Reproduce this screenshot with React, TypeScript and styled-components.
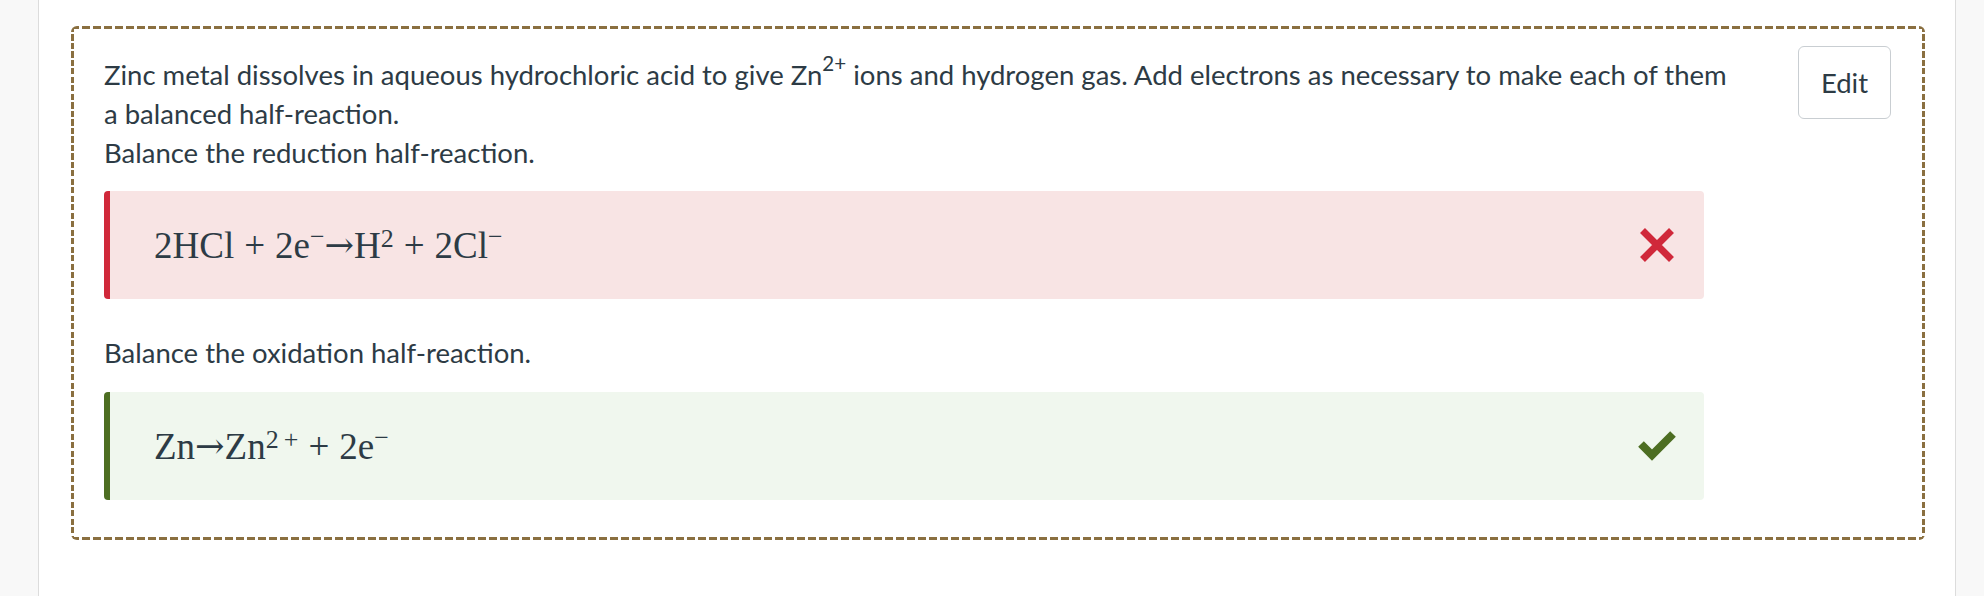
import styled, { createGlobalStyle } from 'styled-components';

const GlobalStyle = createGlobalStyle`
  html, body {
    margin: 0;
    padding: 0;
    background: #ffffff;
  }
  body {
    font-family: Lato, "Liberation Sans", sans-serif;
    color: #2d3b45;
  }
`;

const Page = styled.div`
  display: flex;
  height: 596px;
  overflow: hidden;
`;

const Rail = styled.aside<{ $side: 'left' | 'right' }>`
  flex: none;
  width: ${({ $side }) => ($side === 'left' ? '38px' : '28px')};
  background: #f8f8f8;
  border-${({ $side }) => ($side === 'left' ? 'right' : 'left')}: 1px solid #dcdcdc;
`;

const Main = styled.main`
  flex: 1;
  min-width: 0;
  padding: 26px 30px 0 32px;
  background: #ffffff;
`;

// dashed frame drawn with gradients so the dash rhythm matches the screenshot
const dashH = 'repeating-linear-gradient(90deg, #8a6f40 0 8px, transparent 8px 11px)';
const dashV = 'repeating-linear-gradient(180deg, #8a6f40 0 6px, transparent 6px 8.5px)';

const QuestionCard = styled.section`
  border-radius: 6px;
  padding: 20px 34px 40px 33px;
  background:
    ${dashH} top left / 100% 3px no-repeat,
    ${dashH} bottom left / 100% 3px no-repeat,
    ${dashV} top left / 3px 100% no-repeat,
    ${dashV} top right / 3px 100% no-repeat;
`;

const Header = styled.div`
  display: flex;
  align-items: flex-start;
  gap: 56px;
  margin-bottom: 19px;
`;

const Prompt = styled.div`
  flex: 1;
  margin-top: 9px;
  font-size: 27.5px;
  line-height: 39px;
`;

const Paragraph = styled.p`
  margin: 0;

  sup {
    font-size: 0.75em;
    line-height: 0;
    vertical-align: 0.68em;
  }
`;

const EditButton = styled.button`
  flex: none;
  width: 93px;
  height: 73px;
  padding: 0;
  background: #ffffff;
  border: 1px solid #c9ced2;
  border-radius: 6px;
  font-family: Lato, "Liberation Sans", sans-serif;
  font-size: 27.5px;
  color: #2d3b45;
  cursor: pointer;
`;

const Label = styled.p`
  margin: 0 0 20px;
  font-size: 27.5px;
  line-height: 39px;
`;

type Verdict = 'wrong' | 'right';

const tones = {
  wrong: { bar: '#d0283a', bg: '#f8e4e4' },
  right: { bar: '#4d6e22', bg: '#f0f7ee' },
};

const Feedback = styled.div<{ $verdict: Verdict }>`
  display: flex;
  align-items: center;
  justify-content: space-between;
  max-width: 1600px;
  height: 108px;
  box-sizing: border-box;
  padding: 0 27px 0 44px;
  margin-bottom: 34px;
  background: ${({ $verdict }) => tones[$verdict].bg};
  border-left: 6px solid ${({ $verdict }) => tones[$verdict].bar};
  border-radius: 4px;

  &:last-child {
    margin-bottom: 0;
  }
`;

const MathLine = styled.span`
  font-family: "Liberation Serif", "DejaVu Serif", serif;
  font-size: 37px;
  line-height: 1;
  color: #2d3b45;
  white-space: nowrap;
`;

const Sup = styled.sup<{ $high?: boolean }>`
  font-size: 0.7em;
  line-height: 0;
  vertical-align: ${({ $high }) => ($high ? '0.5em' : '0.44em')};
`;

const Bin = styled.span`
  margin: 0 0.27em;
`;

const Arrow = styled.span`
  font-family: "DejaVu Serif", serif;
  font-size: 0.95em;
  line-height: 0;
  vertical-align: 0.02em;
`;

const Mark = styled.span`
  display: flex;
  align-items: center;
  justify-content: center;
  width: 40px;
  height: 40px;
`;

function CrossIcon() {
  return (
    <svg width="34" height="34" viewBox="0 0 34 34" aria-hidden="true">
      <path d="M2.5 2.5 L31.5 31.5 M31.5 2.5 L2.5 31.5" stroke="#d0283a" strokeWidth="7" fill="none" />
    </svg>
  );
}

function CheckIcon() {
  return (
    <svg width="38" height="30" viewBox="0 0 38 30" aria-hidden="true">
      <path d="M3 13 L14 24 L35 3" stroke="#4d6e22" strokeWidth="8" fill="none" strokeLinejoin="miter" />
    </svg>
  );
}

export default function App() {
  return (
    <>
      <GlobalStyle />
      <Page>
        <Rail $side="left" />
        <Main>
          <QuestionCard>
            <Header>
              <Prompt>
                <Paragraph>
                  Zinc metal dissolves in aqueous hydrochloric acid to give Zn<sup>2+</sup> ions and hydrogen gas. Add
                  electrons as necessary to make each of them a balanced half-reaction.
                </Paragraph>
                <Paragraph>Balance the reduction half-reaction.</Paragraph>
              </Prompt>
              <EditButton type="button">Edit</EditButton>
            </Header>

            <Feedback $verdict="wrong">
              <MathLine>
                2HCl<Bin>+</Bin>2e<Sup $high>−</Sup>
                <Arrow>→</Arrow>H<Sup>2</Sup>
                <Bin>+</Bin>2Cl<Sup $high>−</Sup>
              </MathLine>
              <Mark>
                <CrossIcon />
              </Mark>
            </Feedback>

            <Label>Balance the oxidation half-reaction.</Label>

            <Feedback $verdict="right">
              <MathLine>
                Zn<Arrow>→</Arrow>Zn<Sup>2&thinsp;+</Sup>
                <Bin>+</Bin>2e<Sup $high>−</Sup>
              </MathLine>
              <Mark>
                <CheckIcon />
              </Mark>
            </Feedback>
          </QuestionCard>
        </Main>
        <Rail $side="right" />
      </Page>
    </>
  );
}
